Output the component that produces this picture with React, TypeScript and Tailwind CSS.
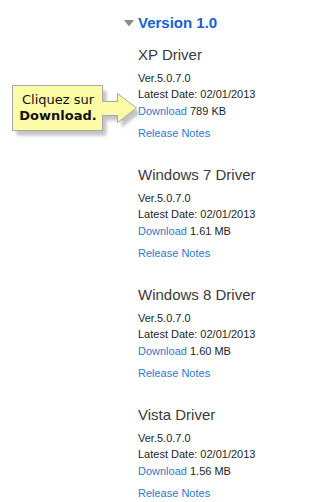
import React from "react";

const drivers = [
  { name: "XP Driver", size: "789 KB" },
  { name: "Windows 7 Driver", size: "1.61 MB" },
  { name: "Windows 8 Driver", size: "1.60 MB" },
  { name: "Vista Driver", size: "1.56 MB" },
];

export default function App() {
  return (
    <div className="relative w-[334px] h-[502px] overflow-hidden bg-white" style={{ fontFamily: '"Liberation Sans", Arial, sans-serif' }}>
      <div className="flex flex-col pl-[138px] pt-[13px]">
        <div className="flex items-center -ml-[14px] gap-[4px]">
          <svg width="10" height="7" viewBox="0 0 10 7" className="mt-[1px]">
            <polygon points="0,0 10,0 5,6.5" fill="#8a8a8a" />
          </svg>
          <span className="text-[15px] leading-5 font-bold text-[#1660d8]">Version 1.0</span>
        </div>
        <div className="flex flex-col gap-[24px] mt-[12px]">
          {drivers.map((d) => (
            <div key={d.name} className="flex flex-col">
              <div className="text-[15px] leading-5 text-[#3a3a3a]">{d.name}</div>
              <div className="mt-[4.5px] flex flex-col text-[11px] leading-[16.5px] text-[#1e1e1e]">
                <div>Ver.5.0.7.0</div>
                <div>Latest Date: 02/01/2013</div>
                <div>
                  <span className="text-[#2b7bcb]">Download</span> {d.size}
                </div>
              </div>
              <div className="mt-[6px] text-[11px] leading-4 text-[#2b7bcb]">Release Notes</div>
            </div>
          ))}
        </div>
      </div>

      <svg className="absolute left-0 top-[80px]" width="150" height="64" viewBox="0 0 150 64">
        <defs>
          <filter id="sh" x="-20%" y="-20%" width="140%" height="160%">
            <feGaussianBlur stdDeviation="1.8" />
          </filter>
        </defs>
        <path
          d="M16.5 10.5 H106.5 V26.5 H121.5 V18.5 L140.5 33 L121.5 47.5 V40.5 H106.5 V55.5 H16.5 Z"
          fill="#c4c4c4"
          filter="url(#sh)"
        />
        <path
          d="M12.5 5.5 H102.5 V21.5 H117.5 V13.5 L136.5 28 L117.5 42.5 V35.5 H102.5 V50.5 H12.5 Z"
          fill="#fdfca6"
          stroke="#a8a8a8"
          strokeWidth="1"
        />
      </svg>
      <div
        className="absolute left-[12px] top-[85px] w-[92px] h-[45px] flex flex-col items-center justify-center text-[13px] leading-4 text-[#111]"
        style={{ fontFamily: '"DejaVu Sans", Verdana, sans-serif' }}
      >
        <div>Cliquez sur</div>
        <div className="font-bold">Download.</div>
      </div>
    </div>
  );
}
